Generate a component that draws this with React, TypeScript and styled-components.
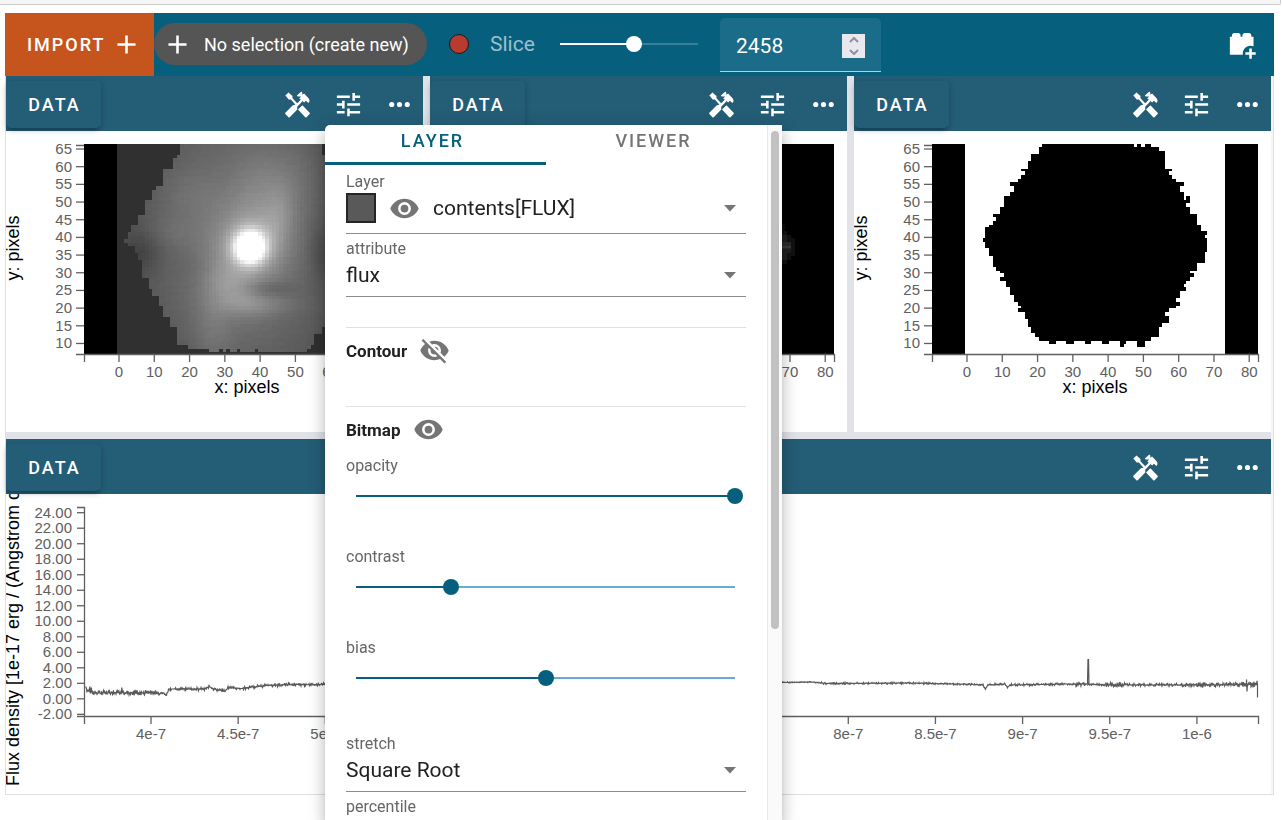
import React, { useState } from "react";
import styled, { createGlobalStyle } from "styled-components";

const GlobalStyle = createGlobalStyle`
  *, *::before, *::after { box-sizing: border-box; }
  body {
    margin: 0;
    background: #fff;
    color: #212121;
    font-family: Roboto, "Liberation Sans", sans-serif;
    font-size: 18px;
  }
  button, input, select { font: inherit; color: inherit; margin: 0; }
  button { border: 0; background: none; padding: 0; cursor: pointer; }
`;

const TEAL = "#065f7d";
const HEADER = "#245d76";

/* ---------- icons ---------- */

const ICONS = {
  plus: "M19,13H13V19H11V13H5V11H11V5H13V11H19V13Z",
  tune: "M3,17V19H9V17H3M3,5V7H13V5H3M13,21V19H21V17H13V15H11V21H13M7,9V11H3V13H7V15H9V9H7M21,13V11H11V13H21M15,9H17V7H21V5H17V3H15V9Z",
  dots: "M16,12A2,2 0 0,1 18,10A2,2 0 0,1 20,12A2,2 0 0,1 18,14A2,2 0 0,1 16,12M10,12A2,2 0 0,1 12,10A2,2 0 0,1 14,12A2,2 0 0,1 12,14A2,2 0 0,1 10,12M4,12A2,2 0 0,1 6,10A2,2 0 0,1 8,12A2,2 0 0,1 6,14A2,2 0 0,1 4,12Z",
  tools:
    "M21.4 18.4L15.8 12.6L12.4 15.8L18 21.8Q18.5 22.2 19 21.8L21.4 19.4Q21.8 18.9 21.4 18.4ZM17.1 10.4L18.5 9L20.4 10.9C21.6 9.7 21.6 8 20.4 6.9L17.1 3.5L15.7 4.5V2.7L15 2L11.5 5.1L12.2 5.9H14.8L13.4 7.3L14.5 8.4L11.8 11.1L8.1 7.1V5.5L5 2.8L2.6 5L5.2 8.1H6.9L10.4 12.2L8.4 12.6L2.6 18.4Q2.2 18.9 2.6 19.4L5 21.8Q5.5 22.2 6 21.8L11.8 15.8V13.8L16 9.3Z",
  eye: "M12,9A3,3 0 0,0 9,12A3,3 0 0,0 12,15A3,3 0 0,0 15,12A3,3 0 0,0 12,9M12,17A5,5 0 0,1 7,12A5,5 0 0,1 12,7A5,5 0 0,1 17,12A5,5 0 0,1 12,17M12,4.5C7,4.5 2.73,7.61 1,12C2.73,16.39 7,19.5 12,19.5C17,19.5 21.27,16.39 23,12C21.27,7.61 17,4.5 12,4.5Z",
  eyeOff:
    "M11.83,9L15,12.16C15,12.11 15,12.05 15,12A3,3 0 0,0 12,9C11.94,9 11.89,9 11.83,9M7.53,9.8L9.08,11.35C9.03,11.56 9,11.77 9,12A3,3 0 0,0 12,15C12.22,15 12.44,14.97 12.65,14.92L14.2,16.47C13.53,16.8 12.79,17 12,17A5,5 0 0,1 7,12C7,11.21 7.2,10.47 7.53,9.8M2,4.27L4.28,6.55L4.73,7C3.08,8.3 1.78,10 1,12C2.73,16.39 7,19.5 12,19.5C13.55,19.5 15.03,19.2 16.38,18.66L16.81,19.08L19.73,22L21,20.73L3.27,3M12,7A5,5 0 0,1 17,12C17,12.64 16.87,13.26 16.64,13.82L19.57,16.75C21.07,15.5 22.27,13.86 23,12C21.27,7.61 17,4.5 12,4.5C10.6,4.5 9.26,4.75 8,5.2L10.17,7.35C10.74,7.13 11.35,7 12,7Z",
  brickPlus:
    "M18,15H20V18H23V20H20V23H18V20H15V18H18V15M3,6H4.6V5A2,2 0 0,1 6.6,3H9.3A2,2 0 0,1 11.3,5V6H12.7V5A2,2 0 0,1 14.7,3H17.6A2,2 0 0,1 19.6,5V6H21.3V13.4A6,6 0 0,0 13,19C13,19.34 13,19.67 13.09,20H3V6Z",
};

const Glyph = styled.svg`
  width: 31px;
  height: 31px;
  flex: none;
  display: block;
  fill: currentColor;
`;

const Icon = ({ name }: { name: keyof typeof ICONS }) => (
  <Glyph viewBox="0 0 24 24" aria-hidden="true">
    <path d={ICONS[name]} />
  </Glyph>
);

/* ---------- shell ---------- */

const OutputEdge = styled.div`
  height: 5px;
  margin: 0 1px 8px 0;
  background: #f5f5f5;
  border: solid #ccc;
  border-width: 0 1px 1px 0;
  border-bottom-right-radius: 2px;
`;

const Page = styled.div`
  margin: 0 8px 0 5px;
`;

const Toolbar = styled.header`
  display: flex;
  height: 63px;
  background: ${TEAL};
  color: #fff;
`;

const ToolbarItems = styled.div`
  flex: 1;
  height: 62px;
  display: flex;
  align-items: center;
  padding-right: 17px;
`;

const ImportButton = styled.button`
  width: 149px;
  padding: 0 12px 1px 22px;
  display: flex;
  align-items: center;
  justify-content: space-between;
  background: #c6551d;
  font-weight: 500;
  letter-spacing: 2px;
`;

const SelectionChip = styled.button`
  width: 273px;
  height: 42px;
  padding: 0 0 0 8px;
  display: flex;
  align-items: center;
  gap: 11px;
  border-radius: 21px;
  background: #555;
  white-space: nowrap;
`;

const RecordDot = styled.span`
  width: 20px;
  height: 20px;
  flex: none;
  margin: 0 21px 0 22px;
  border: 1px solid #1a1a1a;
  border-radius: 50%;
  background: #b93a2f;
`;

const SliceLabel = styled.label`
  width: 62px;
  font-size: 21px;
  color: #9bc0cc;
`;

const Range = styled.input<{ $fill: number; $on: string; $off: string }>`
  appearance: none;
  width: 100%;
  height: 16px;
  display: block;
  background: linear-gradient(
      to right,
      ${(p) => p.$on} ${(p) => p.$fill}%,
      ${(p) => p.$off} ${(p) => p.$fill}%
    )
    center / calc(100% - 16px) 2px no-repeat;
  &::-webkit-slider-thumb {
    appearance: none;
    width: 16px;
    height: 16px;
    border-radius: 50%;
    background: ${(p) => p.$on};
  }
`;

const SliceTrack = styled.div`
  width: 154px;
  margin-right: 14px;
`;

const NumberField = styled.div`
  width: 161px;
  height: 54px;
  margin-top: 2px;
  padding: 2px 16px 0;
  display: flex;
  align-items: center;
  background: #1a6c88;
  border-bottom: 1px solid #b4cfd8;
  border-radius: 5px 5px 0 0;
`;

const NumberInput = styled.input`
  flex: 1;
  min-width: 0;
  padding: 0;
  border: 0;
  background: none;
  font-size: 21px;
  outline: none;
`;

const Spinner = styled.div`
  width: 23px;
  height: 24px;
  display: flex;
  flex-direction: column;
  background: #e9e8ee;
  color: #8f8f9d;
`;

const SpinButton = styled.button`
  flex: 1;
  display: grid;
  place-items: center;
  svg {
    width: 10px;
    height: 6px;
    fill: none;
    stroke: currentColor;
    stroke-width: 2;
  }
`;

const AddViewer = styled.button`
  margin-left: auto;
`;

const Workspace = styled.main`
  padding-right: 2px;
  border: solid #dfdfe2;
  border-width: 0 1px 1px;
  background: #f6f6f6;
`;

const Split = styled.div`
  display: flex;
  flex-direction: column;
  gap: 7px;
  background: #e2e3e8;
`;

const Columns = styled.div`
  display: flex;
  gap: 7px;
`;

const Viewer = styled.section`
  flex: 1;
  min-width: 0;
  background: #fff;
`;

const ViewerBar = styled.div`
  height: 55px;
  padding: 2px 8px 0 0;
  display: flex;
  align-items: center;
  background: ${HEADER};
  color: #fff;
`;

const DataButton = styled.button`
  width: 95px;
  height: 47px;
  margin-right: auto;
  padding-left: 2px;
  border-radius: 5px;
  font-weight: 500;
  letter-spacing: 2px;
  box-shadow: 0 4px 3px -2px rgba(0, 0, 0, 0.18), 0 2px 6px rgba(0, 0, 0, 0.22);
`;

const ViewerTools = styled.div`
  display: flex;
  gap: 20px;
`;

const Plot = styled.svg`
  display: block;
  width: 100%;
  height: auto;
  overflow: hidden;
  font-family: "Liberation Sans", Arial, sans-serif;
  .tick { font-size: 15px; fill: #606060; }
  .title { font-size: 18px; fill: #000; }
  .axis { stroke: #606060; stroke-width: 1.3; fill: none; }
`;

/* ---------- plots ---------- */

const X0 = 113;
const XSTEP = 35.28;
const range = (n: number) => Array.from({ length: n }, (_, i) => i);

const ImageAxes = () => (
  <g>
    <path className="axis" d="M70 223.5H405M78.5 223V231M404.5 223V231M70 14.5H78" />
    {range(12).map((i) => {
      const y = 18 + i * 17.68;
      return (
        <g key={i}>
          <line className="axis" x1="70" x2="78" y1={y} y2={y} />
          <text className="tick" x="66" y={y + 5} textAnchor="end">
            {65 - i * 5}
          </text>
        </g>
      );
    })}
    {range(9).map((i) => {
      const x = X0 + i * XSTEP;
      return (
        <g key={i}>
          <line className="axis" x1={x} x2={x} y1="223" y2="231" />
          <text className="tick" x={x} y="246" textAnchor="middle">
            {i * 10}
          </text>
        </g>
      );
    })}
    <text className="title" x="241" y="262" textAnchor="middle">
      x: pixels
    </text>
    <text className="title" transform="translate(13 117) rotate(-90)" textAnchor="middle">
      y: pixels
    </text>
  </g>
);

// [bottom of band, left edge, right edge] of the valid region, in thirds of a unit
const MASK: number[][] = [
  [87, 540, 963], [96, 531, 1100], [132, 519, 1100], [180, 486, 1100], [195, 468, 1100],
  [231, 456, 1100], [267, 435, 1100], [303, 411, 1100], [318, 393, 1100], [340, 381, 1100],
  [350, 369, 1100], [366, 381, 1100], [387, 405, 1100], [411, 414, 1100], [456, 423, 1100],
  [486, 444, 1100], [510, 456, 1100], [546, 474, 1100], [576, 492, 1100], [606, 510, 975],
  [633, 531, 963], [657, 534, 945], [666, 561, 930], [678, 624, 921],
];

const NOTCHES = [661, 682, 714, 767];

const blob = (x: number, y: number, cx: number, cy: number, sx: number, sy: number, deg: number) => {
  const a = (deg * Math.PI) / 180;
  const dx = x - cx;
  const dy = y - cy;
  const u = dx * Math.cos(a) + dy * Math.sin(a);
  const v = -dx * Math.sin(a) + dy * Math.cos(a);
  return Math.exp(-(u * u) / (2 * sx * sx) - (v * v) / (2 * sy * sy));
};

const galaxyLevels = (() => {
  const levels = new Map<number, string>();
  const cell = 10.58;
  for (let r = 0; r < 60; r++) {
    for (let c = 0; c < 72; c++) {
      const x = 351 + (c + 0.5) * cell;
      const y = 57 + (r + 0.5) * cell;
      const band = MASK.find((m) => y < m[0]);
      if (!band || x < band[1] || x > band[2]) continue;
      if (y > 666 && NOTCHES.some((n) => Math.abs(n - x) < 5.3)) continue;
      const noise = (Math.sin(c * 12.9 + r * 78.2) * 43758.5) % 1;
      const value =
        66 +
        50 * blob(x, y, 720, 350, 230, 360, 0) +
        34 * blob(x, y, 750, 360, 120, 85, -62) +
        34 * blob(x, y, 752, 362, 62, 58, -60) +
        190 * blob(x, y, 750, 367, 31, 33, 0) +
        14 * blob(x, y, 790, 170, 60, 80, 0) +
        18 * blob(x, y, 838, 270, 32, 70, 10) +
        24 * blob(x, y, 690, 490, 70, 40, 35) +
        16 * blob(x, y, 640, 610, 40, 80, 0) +
        18 * blob(x, y, 770, 540, 80, 22, 0) +
        10 * blob(x, y, 560, 210, 70, 60, 0) +
        8 * blob(x, y, 510, 320, 50, 30, 0) +
        8 * blob(x, y, 900, 120, 60, 80, 0) -
        20 * blob(x, y, 425, 385, 40, 45, 0) -
        16 * blob(x, y, 965, 380, 30, 60, 0) -
        10 * blob(x, y, 600, 430, 50, 40, 0) -
        18 * blob(x, y, 805, 490, 50, 18, 0) +
        noise;
      const g = Math.min(255, Math.round(value / 2) * 2);
      const x1 = Math.round(((351 + c * cell) / 3) - 6);
      const x2 = Math.round(((351 + (c + 1) * cell) / 3) - 6);
      const y1 = Math.round(((57 + r * cell) / 3) - 6);
      const y2 = Math.round(((57 + (r + 1) * cell) / 3) - 6);
      levels.set(g, (levels.get(g) ?? "") + `M${x1} ${y1}H${x2}V${y2}H${x1}Z`);
    }
  }
  return [...levels.entries()];
})();

const GalaxyPlot = () => (
  <Plot viewBox="0 0 417 301" role="img" aria-label="Flux image">
    <g shapeRendering="crispEdges">
      <rect x="78" y="13" width="326" height="210" />
      <rect x="111" y="13" width="260" height="210" fill="#303030" />
      {galaxyLevels.map(([g, d]) => (
        <path key={g} d={d} fill={`rgb(${g},${g},${g})`} />
      ))}
    </g>
    <ImageAxes />
  </Plot>
);

const VariancePlot = () => (
  <Plot viewBox="0 0 417 301" role="img" aria-label="Inverse variance image">
    <g shapeRendering="crispEdges">
      <rect x="78" y="13" width="326" height="210" />
      <path d="M330 93H355V132H330Z" fill="#0b0b0b" />
      <path d="M330 100H357V104H361V107H365V125H361V129H357V133H330Z" fill="#111" />
      <path d="M330 104H357V111H361V122H357V129H330Z" fill="#1f1f1f" />
      <path d="M330 111H361V118H330Z" fill="#2a2a2a" />
      <path d="M330 115H361V117H330Z" fill="#3a3a3a" />
    </g>
    <ImageAxes />
  </Plot>
);

const HEXAGON =
  "M591 42V52H582V72H558V93H549V117H528V123H540V135H528V147H519V156H495V167H507V186H495V198H477V231H465V252H444V260H453V274H444V285H432V291H420V324H414V336H420V353H432V378H444V411H453V423H465V429H477V441H465V453H483V471H495V495H507V515H519V528H528V534H519V546H540V567H549V591H558V608H570V621H582V633H612V641H633V633H663V641H687V633H720V641H738V633H771V641H792V633H825V651H837V641H843V633H876V651H900V633H918V621H942V591H951V579H972V558H960V546H972V534H993V527H1005V516H993V504H1005V483H1023V471H1017V461H1023V453H1035V441H1047V430H1035V423H1056V399H1080V366H1086V324H1080V315H1086V303H1068V285H1056V252H1035V231H1023V219H1035V198H1023V210H1017V186H1005V167H1017V156H993V147H981V135H972V123H981V117H960V63H942V52H918V42H900V52H888V42H876V52H867V42Z";

const MaskPlot = () => (
  <Plot viewBox="0 0 417 301" role="img" aria-label="Mask image">
    <g shapeRendering="crispEdges">
      <rect x="78" y="13" width="33" height="210" />
      <rect x="371" y="13" width="33" height="210" />
      <path d={HEXAGON} transform="translate(-9 -1) scale(0.33333)" />
    </g>
    <ImageAxes />
  </Plot>
);

// anchor points of the spectrum: x, y, noise amplitude
const TREND: number[][] = [
  [79.5, 192, 1], [81, 196, 4], [87, 199, 2], [115, 198.5, 2.5], [140, 199, 2], [151, 198.5, 1.5],
  [153, 201, 1], [155, 198.5, 1], [158, 199, 1], [160, 201.5, 1], [163, 195, 1], [175, 195, 1.5],
  [198, 195, 1.5], [203, 192.5, 1.5], [207, 194.5, 1.5], [219, 197.5, 1], [222, 193.5, 1.5], [235, 194.5, 1.5],
  [260, 191.5, 1.5], [285, 190.5, 1.5], [319, 190.5, 1], [450, 190, 1], [776, 188.5, 0.5],
  [805, 188, 0.8], [820, 189.5, 0.8], [905, 189, 0.8], [970, 190.5, 0.6], [977, 191, 1],
  [979.5, 195, 0.3], [982, 191, 1], [999, 190, 1], [1001.5, 193.5, 0.3], [1004, 191, 1],
  [1060, 190, 0.8], [1070, 190, 2.5], [1080, 190, 0.8], [1100, 190.8, 2], [1120, 190.8, 1.2],
  [1170, 191, 2], [1230, 190.5, 3], [1252, 190, 2.5],
];

const spectrum = (() => {
  let d = "";
  for (let x = 79.5; x <= 1251.5; x += 0.5) {
    const i = Math.max(0, TREND.findIndex((p) => p[0] > x) - 1);
    const [xa, ya, na] = TREND[i];
    const [xb, yb] = TREND[i + 1];
    const t = (x - xa) / (xb - xa);
    const raw = (Math.sin(x * 91.7) * 9173.3) % 1;
    const y = ya + (yb - ya) * t + raw * Math.abs(raw) * na * 1.2;
    d += `${d ? "L" : "M"}${x} ${y.toFixed(1)}`;
    if (x === 1081.5) d += "L1082 165.5L1082.5 165.5L1083 190";
    if (x === 1240.5) d += "L1240.5 185.5L1241 197.5L1241.5 190";
    if (x === 115.5) d += "L115.8 193.5L116.3 198";
  }
  return d + "L1251.5 203.5";
})();

const X_LABELS = ["4e-7", "4.5e-7", "5e-7", "5.5e-7", "6e-7", "6.5e-7", "7e-7", "7.5e-7", "8e-7", "8.5e-7", "9e-7", "9.5e-7", "1e-6"];

const SpectrumPlot = () => (
  <Plot viewBox="0 0 1265 300" role="img" aria-label="Flux density spectrum">
    <path className="axis" d="M71 13.5H78.5V230M71 222.5H1252.5V230" />
    {range(14).map((i) => {
      const y = 18.7 + i * 15.51;
      return (
        <g key={i}>
          <line className="axis" x1="71" x2="78" y1={y} y2={y} />
          <text className="tick" x="66" y={y + 5} textAnchor="end">
            {(24 - i * 2).toFixed(2)}
          </text>
        </g>
      );
    })}
    {X_LABELS.map((label, i) => {
      const x = 145 + i * 87.16;
      return (
        <g key={label}>
          <line className="axis" x1={x} x2={x} y1="222" y2="230" />
          <text className="tick" x={x} y="245" textAnchor="middle">
            {label}
          </text>
        </g>
      );
    })}
    <path d={spectrum} fill="none" stroke="#595959" strokeWidth="1.2" />
    <text className="title" transform="translate(13 292) rotate(-90)">
      Flux density [1e-17 erg / (Angstrom cm2)]
    </text>
  </Plot>
);

/* ---------- options menu ---------- */

const Menu = styled.aside`
  position: fixed;
  top: 125px;
  bottom: 0;
  left: 325px;
  width: 457px;
  display: flex;
  background: #fff;
  border-radius: 5px 0 0 0;
  box-shadow: 0 7px 7px -4px rgba(0, 0, 0, 0.2), 0 10px 13px 1px rgba(0, 0, 0, 0.14),
    0 4px 18px 3px rgba(0, 0, 0, 0.12);
`;

const MenuScroll = styled.div`
  flex: 1;
  overflow: hidden;
`;

const ScrollTrack = styled.div`
  width: 15px;
  padding: 6px 3px 0;
  background: #fafafa;
  border-left: 1px solid #e8e8e8;
`;

const ScrollThumb = styled.div`
  height: 498px;
  width: 8px;
  border-radius: 4px;
  background: #c1c1c1;
`;

const Tabs = styled.div`
  display: flex;
`;

const Tab = styled.button<{ $active?: boolean }>`
  flex: 1;
  height: 40px;
  padding: 0 6px 7px 0;
  border-bottom: 3px solid ${(p) => (p.$active ? TEAL : "transparent")};
  color: ${(p) => (p.$active ? TEAL : "#757575")};
  font-weight: 500;
  letter-spacing: 2px;
`;

const MenuBody = styled.div`
  padding: 2px 21px 0;
`;

const Field = styled.div<{ $roomy?: boolean }>`
  padding: 4px 0 ${(p) => (p.$roomy ? 8 : 4)}px;
  border-bottom: 1px solid #8c8c8c;
`;

const Label = styled.label`
  display: block;
  height: 20px;
  line-height: 22px;
  font-size: 16px;
  color: #666;
`;

const FieldRow = styled.div`
  height: 34px;
  display: flex;
  align-items: center;
`;

const Swatch = styled.button`
  width: 30px;
  height: 30px;
  margin-right: 13px;
  background: #595959;
  border: 2px solid #262626;
`;

const EyeButton = styled.button<{ $gap: number }>`
  margin-right: ${(p) => p.$gap}px;
  color: #757575;
`;

const Select = styled.select`
  flex: 1;
  min-width: 0;
  height: 32px;
  padding: 0;
  border: 0;
  appearance: none;
  background: none;
  font-size: 21px;
  outline: none;
`;

const Caret = styled.svg`
  width: 14px;
  height: 7px;
  flex: none;
  margin-right: 9px;
  fill: #757575;
`;

const Divided = styled.section<{ $space: number; $tail: number }>`
  margin-top: ${(p) => p.$space}px;
  padding-bottom: ${(p) => p.$tail}px;
  border-top: 1px solid #e0e0e0;
`;

const Heading = styled.div`
  height: 46px;
  padding-bottom: 1px;
  display: flex;
  align-items: center;
  gap: 12px;
  font-size: 17px;
  font-weight: 700;
`;

const SliderBlock = styled.div`
  height: 91px;
  padding-top: 2px;
`;

const SliderRow = styled.div`
  padding: 13px 3px 0 2px;
`;

const SelectField = ({ id, label, options, children, roomy }: {
  id: string;
  label: string;
  options: string[];
  children?: React.ReactNode;
  roomy?: boolean;
}) => (
  <Field $roomy={roomy}>
    <Label htmlFor={id}>{label}</Label>
    <FieldRow>
      {children}
      <Select id={id}>
        {options.map((o) => (
          <option key={o}>{o}</option>
        ))}
      </Select>
      <Caret viewBox="0 0 14 7" aria-hidden="true">
        <path d="M1 0H13L7 6.5Z" />
      </Caret>
    </FieldRow>
  </Field>
);

const SliderField = ({ id, initial }: { id: string; initial: number }) => {
  const [value, setValue] = useState(initial);
  return (
    <SliderBlock>
      <Label htmlFor={id}>{id}</Label>
      <SliderRow>
        <Range
          id={id}
          type="range"
          min={0}
          max={100}
          value={value}
          onChange={(e) => setValue(+e.target.value)}
          $fill={value}
          $on={TEAL}
          $off="#66aecb"
        />
      </SliderRow>
    </SliderBlock>
  );
};

const ViewerPane = ({ children }: { children: React.ReactNode }) => (
  <Viewer>
    <ViewerBar>
      <DataButton>DATA</DataButton>
      <ViewerTools>
        <button aria-label="Tools"><Icon name="tools" /></button>
        <button aria-label="Options"><Icon name="tune" /></button>
        <button aria-label="More"><Icon name="dots" /></button>
      </ViewerTools>
    </ViewerBar>
    {children}
  </Viewer>
);

const SLICES = 4562;

export default function App() {
  const [slice, setSlice] = useState(2458);
  return (
    <>
      <GlobalStyle />
      <OutputEdge />
      <Page>
        <Toolbar>
          <ImportButton>
            IMPORT
            <Icon name="plus" />
          </ImportButton>
          <ToolbarItems>
            <SelectionChip>
              <Icon name="plus" />
              No selection (create new)
            </SelectionChip>
            <RecordDot />
            <SliceLabel htmlFor="slice">Slice</SliceLabel>
            <SliceTrack>
              <Range
                id="slice"
                type="range"
                min={0}
                max={SLICES}
                value={slice}
                onChange={(e) => setSlice(+e.target.value)}
                $fill={(slice / SLICES) * 100}
                $on="#fff"
                $off="#387f97"
              />
            </SliceTrack>
            <NumberField>
              <NumberInput
                aria-label="Slice number"
                inputMode="numeric"
                value={slice}
                onChange={(e) => setSlice(Number(e.target.value) || 0)}
              />
              <Spinner>
                <SpinButton aria-label="Increase" onClick={() => setSlice(slice + 1)}>
                  <svg viewBox="0 0 10 6"><path d="M1 5L5 1L9 5" /></svg>
                </SpinButton>
                <SpinButton aria-label="Decrease" onClick={() => setSlice(slice - 1)}>
                  <svg viewBox="0 0 10 6"><path d="M1 1L5 5L9 1" /></svg>
                </SpinButton>
              </Spinner>
            </NumberField>
            <AddViewer aria-label="New viewer"><Icon name="brickPlus" /></AddViewer>
          </ToolbarItems>
        </Toolbar>
        <Workspace>
          <Split>
            <Columns>
              <ViewerPane><GalaxyPlot /></ViewerPane>
              <ViewerPane><VariancePlot /></ViewerPane>
              <ViewerPane><MaskPlot /></ViewerPane>
            </Columns>
            <ViewerPane><SpectrumPlot /></ViewerPane>
          </Split>
        </Workspace>
      </Page>
      <Menu>
        <MenuScroll>
          <Tabs>
            <Tab $active>LAYER</Tab>
            <Tab>VIEWER</Tab>
          </Tabs>
          <MenuBody>
            <SelectField id="layer" label="Layer" options={["contents[FLUX]"]} roomy>
              <Swatch aria-label="Layer color" />
              <EyeButton aria-label="Toggle layer" $gap={13}><Icon name="eye" /></EyeButton>
            </SelectField>
            <SelectField id="attribute" label="attribute" options={["flux"]} />
            <Divided $space={30} $tail={32}>
              <Heading>
                Contour
                <EyeButton aria-label="Toggle contour" $gap={0}><Icon name="eyeOff" /></EyeButton>
              </Heading>
            </Divided>
            <Divided $space={0} $tail={3}>
              <Heading>
                Bitmap
                <EyeButton aria-label="Toggle bitmap" $gap={0}><Icon name="eye" /></EyeButton>
              </Heading>
              <SliderField id="opacity" initial={100} />
              <SliderField id="contrast" initial={25} />
              <SliderField id="bias" initial={50} />
            </Divided>
            <SelectField id="stretch" label="stretch" options={["Square Root"]} />
            <SelectField id="percentile" label="percentile" options={["99.5%"]} />
          </MenuBody>
        </MenuScroll>
        <ScrollTrack aria-hidden="true">
          <ScrollThumb />
        </ScrollTrack>
      </Menu>
    </>
  );
}
